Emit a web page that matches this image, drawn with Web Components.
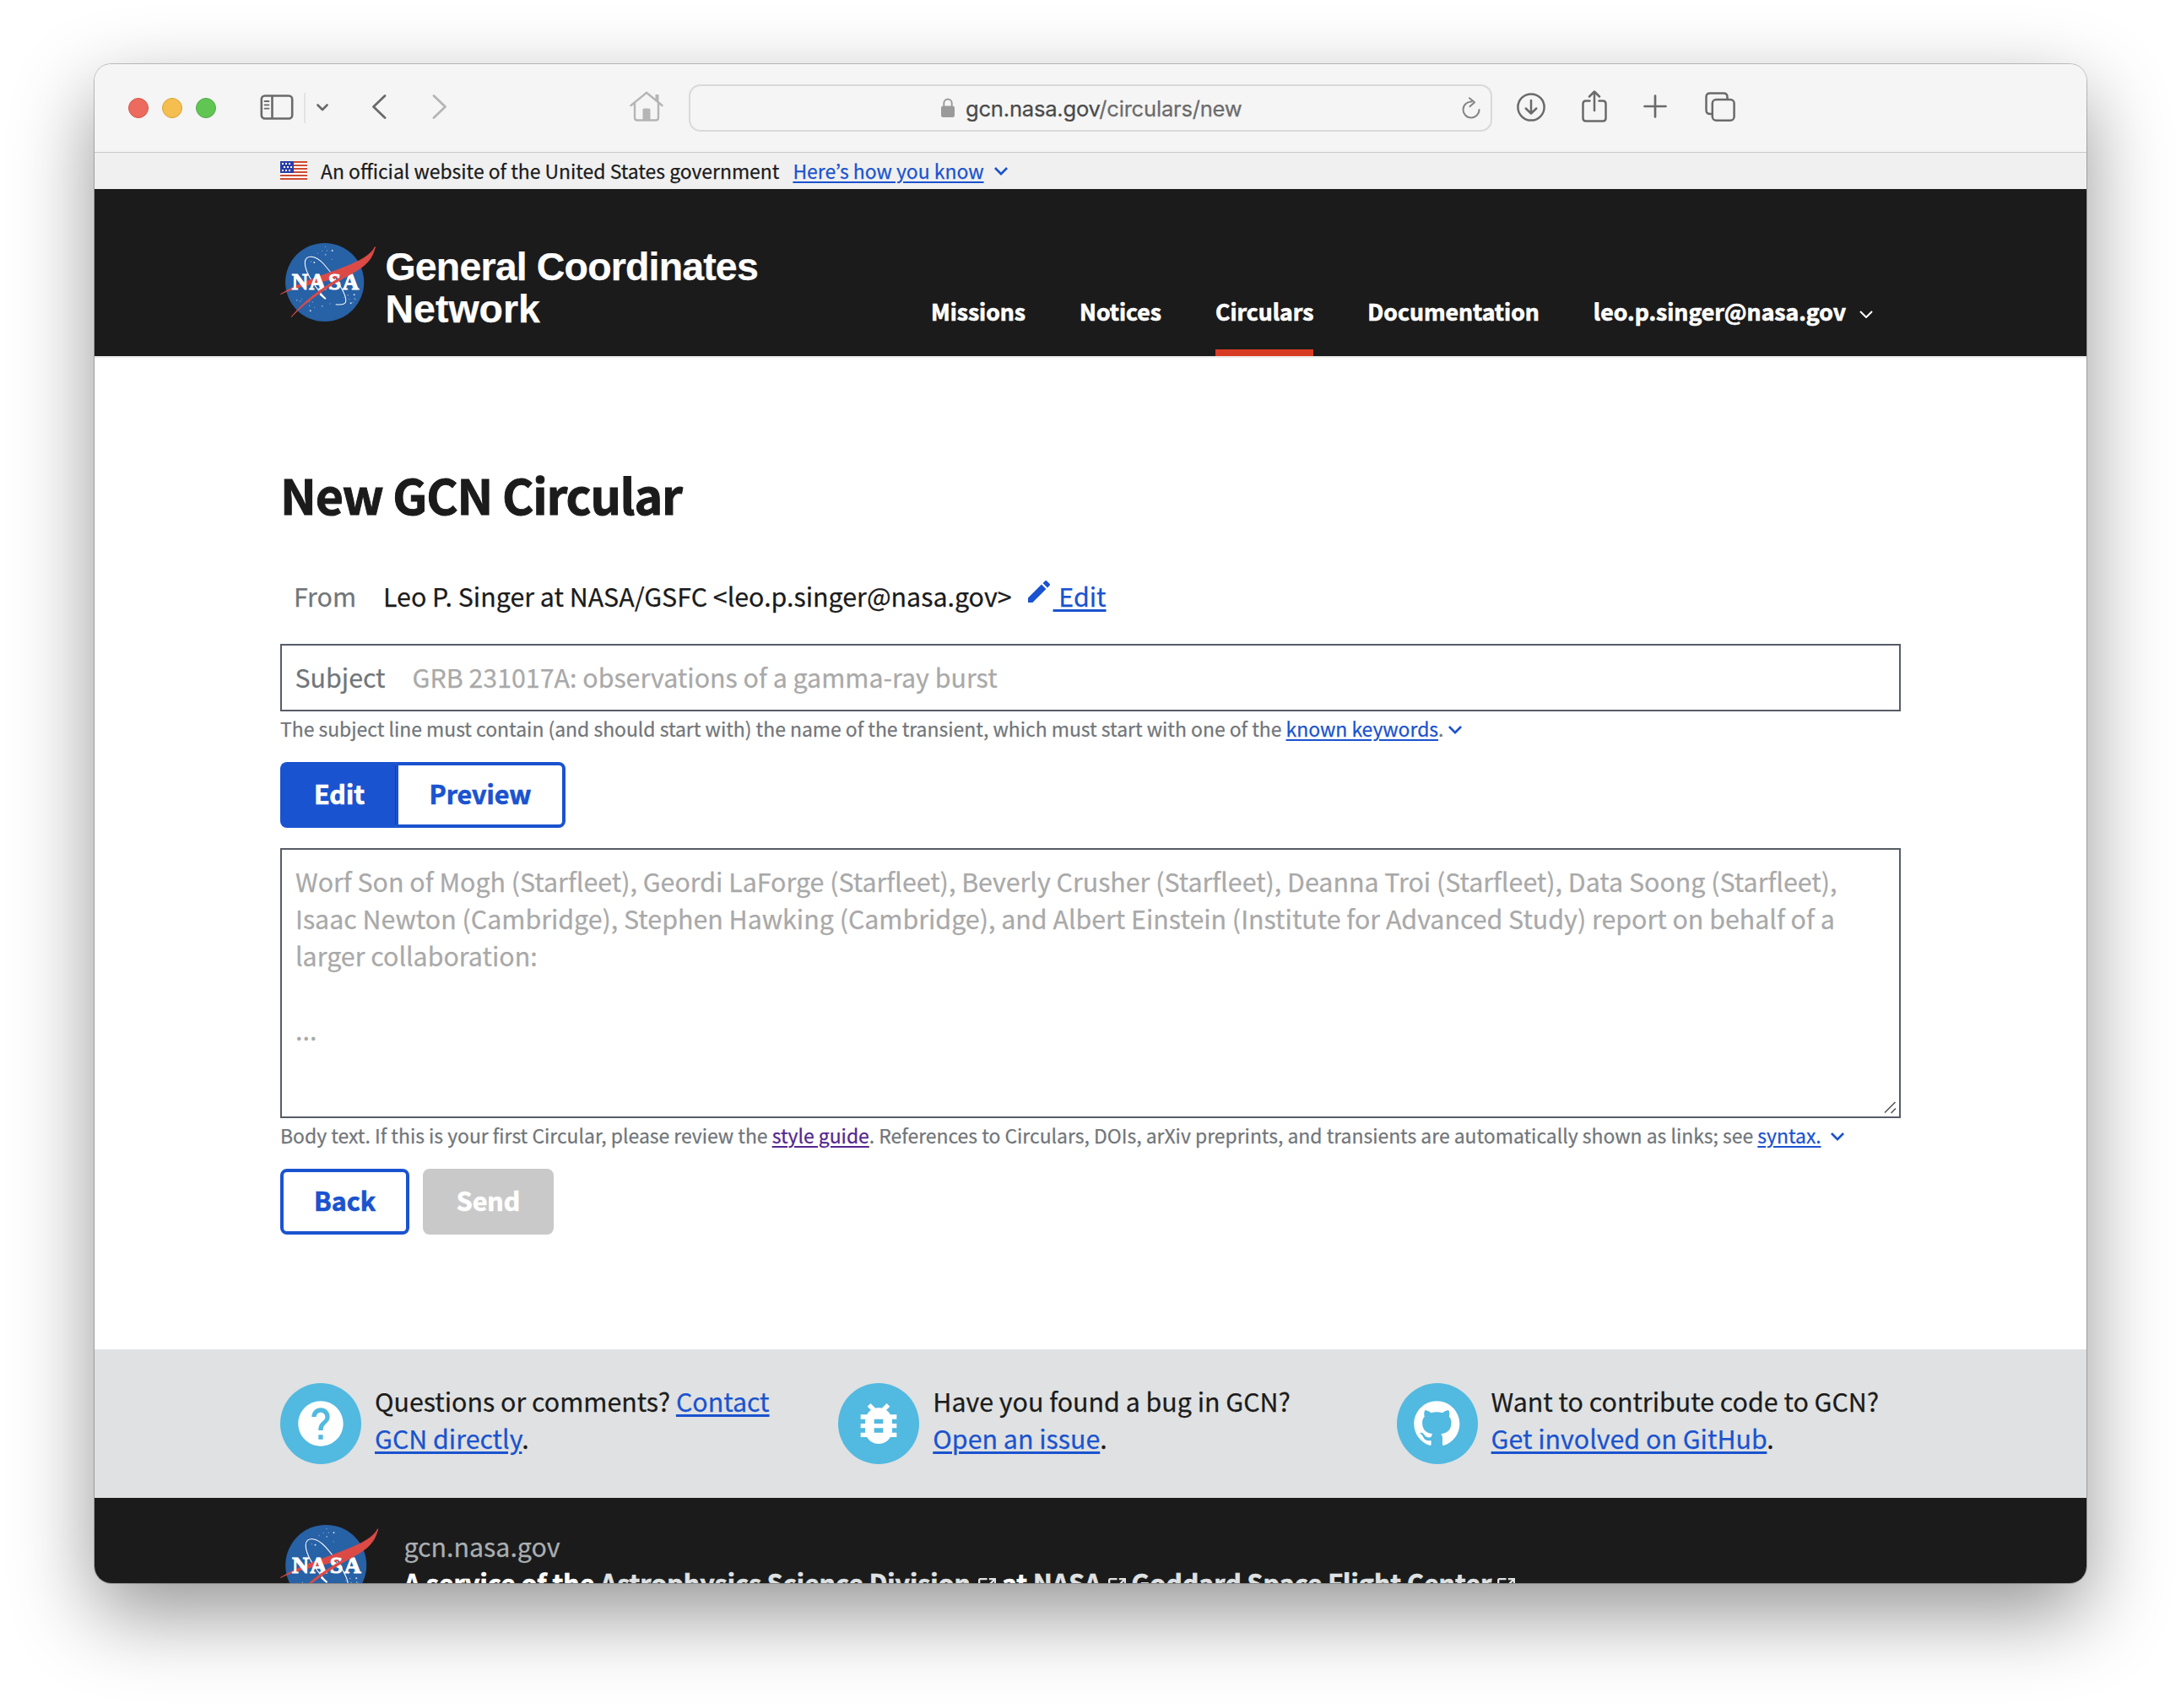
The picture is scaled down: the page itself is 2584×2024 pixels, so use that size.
<!DOCTYPE html>
<html lang="en">
<head>
<meta charset="utf-8">
<title>New GCN Circular</title>
<style>
  html { background: #fff; }
  body { margin: 0; padding: 76px 112px 148px; width: 2360px; overflow: hidden;
    font-family: "Noto Sans CJK KR", "Noto Sans", sans-serif; font-size: 30.37px; line-height: 44px; color: #1b1b1b; -webkit-text-stroke-width: .25px; }
</style>
</head>
<body>
<browser-window>
  <browser-toolbar slot="toolbar"></browser-toolbar>
  <gov-banner></gov-banner>
  <site-header>
    <nav-link>Missions</nav-link>
    <nav-link>Notices</nav-link>
    <nav-link current>Circulars</nav-link>
    <nav-link>Documentation</nav-link>
    <nav-link menu>leo.p.singer@nasa.gov</nav-link>
  </site-header>
  <circular-form></circular-form>
  <support-strip>
    <support-card icon="help">Questions or comments? <text-link>Contact</text-link><br><text-link>GCN directly</text-link>.</support-card>
    <support-card icon="bug">Have you found a bug in GCN?<br><text-link>Open an issue</text-link>.</support-card>
    <support-card icon="github">Want to contribute code to GCN?<br><text-link>Get involved on GitHub</text-link>.</support-card>
  </support-strip>
  <site-identifier></site-identifier>
</browser-window>

<script>
const define = (name, html) => {
  const t = document.createElement('template');
  t.innerHTML = html;
  customElements.define(name, class extends HTMLElement {
    constructor() { super(); this.attachShadow({ mode: 'open' }).append(t.content.cloneNode(true)); }
  });
};

const ICONS = {
  help: ['0 0 24 24', '<path d="M12 2C6.48 2 2 6.48 2 12s4.48 10 10 10 10-4.48 10-10S17.52 2 12 2zm1 17h-2v-2h2v2zm2.07-7.75l-.9.92C13.45 12.9 13 13.5 13 15h-2v-.5c0-1.1.45-2.1 1.17-2.83l1.24-1.26c.37-.36.59-.86.59-1.41 0-1.1-.9-2-2-2s-2 .9-2 2H8c0-2.21 1.79-4 4-4s4 1.79 4 4c0 .88-.36 1.68-.93 2.25z"/>'],
  bug: ['0 0 24 24', '<path d="M20 8h-2.81c-.45-.78-1.07-1.45-1.82-1.96L17 4.41 15.59 3l-2.17 2.17C12.96 5.06 12.49 5 12 5c-.49 0-.96.06-1.41.17L8.41 3 7 4.41l1.62 1.63C7.88 6.55 7.26 7.22 6.81 8H4v2h2.09c-.05.33-.09.66-.09 1v1H4v2h2v1c0 .34.04.67.09 1H4v2h2.81c1.04 1.79 2.97 3 5.19 3s4.15-1.21 5.19-3H20v-2h-2.09c.05-.33.09-.66.09-1v-1h2v-2h-2v-1c0-.34-.04-.67-.09-1H20V8zm-6 8h-4v-2h4v2zm0-4h-4v-2h4v2z"/>'],
  github: ['-1.9 -2 28.4 28.4', '<path d="M12 .297c-6.63 0-12 5.373-12 12 0 5.303 3.438 9.8 8.205 11.385.6.113.82-.258.82-.577 0-.285-.01-1.04-.015-2.04-3.338.724-4.042-1.61-4.042-1.61C4.422 18.07 3.633 17.7 3.633 17.7c-1.087-.744.084-.729.084-.729 1.205.084 1.838 1.236 1.838 1.236 1.07 1.835 2.809 1.305 3.495.998.108-.776.417-1.305.76-1.605-2.665-.3-5.466-1.332-5.466-5.93 0-1.31.465-2.38 1.235-3.22-.135-.303-.54-1.523.105-3.176 0 0 1.005-.322 3.3 1.23.96-.267 1.98-.399 3-.405 1.02.006 2.04.138 3 .405 2.28-1.552 3.285-1.23 3.285-1.23.645 1.653.24 2.873.12 3.176.765.84 1.23 1.91 1.23 3.22 0 4.61-2.805 5.625-5.475 5.92.42.36.81 1.096.81 2.22 0 1.606-.015 2.896-.015 3.286 0 .315.21.69.825.57C20.565 22.092 24 17.592 24 12.297c0-6.627-5.373-12-12-12"/>'],
  edit: ['3 3 18 18', '<path d="M3 17.25V21h3.75L17.81 9.94l-3.75-3.75L3 17.25zM20.71 7.04c.39-.39.39-1.02 0-1.41l-2.34-2.34c-.39-.39-1.02-.39-1.41 0l-1.83 1.83 3.75 3.75 1.83-1.83z"/>'],
  expand: ['6 8.59 12 7.41', '<path d="M16.59 8.59 12 13.17 7.41 8.59 6 10l6 6 6-6z"/>'],
  launch: ['3 3 18 18', '<path d="M19 19H5V5h7V3H5c-1.11 0-2 .9-2 2v14c0 1.1.89 2 2 2h14c1.1 0 2-.9 2-2v-7h-2v7zM14 3v2h3.59l-9.83 9.83 1.41 1.41L19 6.41V10h2V3h-7z"/>'],
  menu: ['0 0 16 9', '<path d="M1 1l7 7 7-7" fill="none" stroke="currentColor" stroke-width="2"/>'],
  sidebar: ['0 0 40 30', '<g fill="none" stroke="currentColor" stroke-width="2.6"><rect x="1.8" y="1.5" width="36.4" height="27" rx="4"/><path d="M14.5 2v26"/><path d="M5.500 8h5M5.500 12.300h5M5.500 16.600h5" stroke-width="1.8" stroke-linecap="round"/></g>'],
  down: ['0 0 14 9', '<path d="M1.500 1.500l5.500 5.500 5.500-5.500" fill="none" stroke="currentColor" stroke-width="2.600" stroke-linecap="round" stroke-linejoin="round"/>'],
  back: ['0 0 18 29', '<path d="M16 1.500 2.500 14.500 16 27.500" fill="none" stroke="currentColor" stroke-width="2.800" stroke-linecap="round" stroke-linejoin="round"/>'],
  forward: ['0 0 18 29', '<path d="M2 1.500 15.500 14.500 2 27.500" fill="none" stroke="currentColor" stroke-width="2.800" stroke-linecap="round" stroke-linejoin="round"/>'],
  home: ['0 0 40 36', '<g fill="none" stroke="currentColor" stroke-width="2.400" stroke-linecap="round" stroke-linejoin="round"><path d="M1.500 17 20 1.800 38.500 17M6 14v17.500q0 3 3 3h22q3 0 3-3V14"/></g><path d="M15.500 34V22q0-1.500 1.500-1.500h6q1.500 0 1.500 1.500v12zM30.500 4h4v10l-4-3.500z"/>'],
  lock: ['0 0 16 23', '<rect x="0" y="9.500" width="16" height="13.500" rx="2.500"/><path d="M3.300 11V6.200a4.700 4.700 0 0 1 9.400 0V11" fill="none" stroke="currentColor" stroke-width="1.900"/>'],
  reload: ['0 0 22 26', '<path d="M11.500 5.500A9.500 9.500 0 1 0 20.500 15M9 1.200l6 5-5.600 5" fill="none" stroke="currentColor" stroke-width="2" stroke-linecap="round" stroke-linejoin="round"/>'],
  download: ['0 0 34 34', '<g fill="none" stroke="currentColor" stroke-width="2.500" stroke-linecap="round" stroke-linejoin="round"><circle cx="17" cy="17" r="15.600"/><path d="M17 9v15.500M10.800 18.500l6.200 6.200 6.200-6.200"/></g>'],
  share: ['0 0 30 38', '<g fill="none" stroke="currentColor" stroke-width="2.500" stroke-linecap="round" stroke-linejoin="round"><path d="M9.500 12.500H5q-3.500 0-3.500 3.500v17q0 3.500 3.500 3.500h20q3.500 0 3.500-3.500V16q0-3.500-3.500-3.500h-4.500M15 24V2M9 7.500 15 1.500l6 6"/></g>'],
  plus: ['0 0 28 28', '<path d="M14 1.500v25M1.500 14h25" stroke="currentColor" stroke-width="2.700" stroke-linecap="round"/>'],
  tabs: ['0 0 36 35', '<g fill="none" stroke="currentColor" stroke-width="2.500"><rect x="8.800" y="9" width="25.800" height="24.700" rx="4.500"/><path d="M8.800 26H6q-4.500 0-4.500-4.500v-15.500Q1.500 1.500 6 1.500h16q4.500 0 4.500 4.500v3"/></g>']
};

customElements.define('ui-icon', class extends HTMLElement {
  constructor() { super(); this.attachShadow({ mode: 'open' }); }
  connectedCallback() {
    const [box, body] = ICONS[this.getAttribute('name')];
    const w = this.getAttribute('w'), h = this.getAttribute('h') || w;
    this.shadowRoot.innerHTML = `<style>:host{display:inline-block;flex:none;width:${w}px;height:${h}px}svg{display:block}</style><svg width="${w}" height="${h}" viewBox="${box}" preserveAspectRatio="none" fill="currentColor">${body}</svg>`;
  }
});

define('text-link', `<style>:host{color:#1a53cf;text-decoration:underline;text-decoration-thickness:3px;text-underline-offset:3px}
:host([small]){text-decoration-thickness:2px;text-underline-offset:3px}:host([visited]){color:#54278f}</style><slot></slot>`);

define('browser-window', `<style>
:host{display:flex;flex-direction:column;height:1800px;box-shadow:0 0 0 1px rgba(0,0,0,.22),0 36px 96px rgba(0,0,0,.42);border-radius:20px;background:#fff}
.clip{display:flex;flex-direction:column;height:1800px;overflow:hidden;border-radius:20px}
</style><div class="clip"><slot name="toolbar"></slot><slot></slot></div>`);

define('browser-toolbar', `<style>
:host{display:flex;flex:none;box-sizing:border-box;height:105px;padding:0 0 1px 40px;background:#f5f5f5;border-bottom:1px solid #c9c9c9;align-items:center;color:#6a6a6a}
.dot{width:22px;height:22px;border-radius:50%;border:1px solid;margin-right:16px}
.sep{width:2px;height:36px;background:#e3e3e3;margin:0 13px}
.url{display:flex;box-sizing:border-box;width:952px;height:56px;border:2px solid #d9d9d9;border-radius:14px;align-items:center;margin:0 29px 0 30px;padding:0 12px 0 297px;font:25.600px/30px Inter,sans-serif;letter-spacing:-.230px;color:#6c6c6c}
.url b{font-weight:400;color:#4a4a4a}
.url span{margin:2px auto 0 13px}
.light{color:#b5b5b5}
</style>
<i class="dot" style="background:#ec6a5e;border-color:#d55549"></i><i class="dot" style="background:#f4bf4f;border-color:#d9a23b"></i><i class="dot" style="background:#61c554;border-color:#50a944"></i>
<ui-icon name="sidebar" w="40" h="30" style="margin-left:36px;margin-top:-2px"></ui-icon><i class="sep" style="margin-left:12px"></i><ui-icon name="down" w="14" h="9"></ui-icon>
<ui-icon name="back" w="18" h="29" style="margin-left:51px;margin-top:-2px"></ui-icon><ui-icon class="light" name="forward" w="18" h="29" style="margin-left:54px;margin-top:-2px"></ui-icon>
<ui-icon class="light" name="home" w="40" h="36" style="margin-left:216px;margin-top:-4px"></ui-icon>
<div class="url"><ui-icon name="lock" w="16" h="23" style="color:#9a9a9a"></ui-icon><span><b>gcn.nasa.gov</b>/circulars/new</span><ui-icon name="reload" w="22" h="26" style="color:#868686"></ui-icon></div>
<ui-icon name="download" w="34" style="margin-top:-1px"></ui-icon><ui-icon name="share" w="30" h="38" style="margin-left:43px;margin-top:-4px"></ui-icon><ui-icon name="plus" w="28" style="margin-left:43px;margin-top:-3px"></ui-icon><ui-icon name="tabs" w="36" h="35" style="margin-left:44.500px;margin-top:-3px"></ui-icon>`);

define('gov-banner', `<style>
:host{display:flex;flex:none;box-sizing:border-box;height:43px;padding:0 0 2px 220px;background:#f0f0f0;align-items:center;font-size:22.915px;line-height:40px}
.flag{margin-right:16px}.t{margin-right:16px}ui-icon{color:#1a53cf;margin-left:12px;margin-top:3px}
</style>
<svg class="flag" width="32" height="22" viewBox="0 0 32 22"><path fill="#fff" d="M0 0h32v22H0z"/><path stroke="#ce4b32" stroke-width="2" d="M0 1h32M0 5h32M0 9h32M0 13h32M0 17h32M0 21h32"/><path fill="#2a3ea8" d="M0 0h16v14H0z"/><path stroke="#fff" stroke-width="2" stroke-dasharray="2 2" d="M2 3h12M4 7h12M2 11h12"/></svg>
<span class="t">An official website of the United States government</span><text-link small>Here’s how you know</text-link><ui-icon name="expand" w="16" h="10"></ui-icon>`);

define('nasa-logo', `<style>:host{display:block;flex:none;line-height:0}svg{overflow:visible;width:var(--w,114px);height:auto;display:block}text{font:bold 81px "Liberation Serif",serif;fill:#fff;stroke:#fff;stroke-width:3}.w{fill:#dc4a46;stroke:#dc4a46;stroke-width:2}</style>
<svg viewBox="21 39 342 279" width="114" height="93">
<circle cx="179" cy="178.500" r="139.800" fill="#2761a6"/>
<g fill="#cfe0f2"><circle cx="206" cy="66" r="3"/><circle cx="142" cy="108" r="3"/><circle cx="128" cy="280" r="3"/><circle cx="272" cy="253" r="3"/><circle cx="284" cy="223" r="3"/>
<g opacity=".55"><circle cx="181" cy="52" r="2"/><circle cx="170" cy="67" r="2"/><circle cx="155" cy="76" r="2"/><circle cx="182" cy="80" r="3"/><circle cx="205" cy="97" r="2"/><circle cx="188" cy="66" r="2"/><circle cx="130" cy="105" r="2"/><circle cx="80" cy="242" r="2.500"/><circle cx="92" cy="246" r="2.500"/><circle cx="98" cy="238" r="2"/><circle cx="124" cy="247" r="2"/><circle cx="136" cy="249" r="2"/><circle cx="125" cy="262" r="2.500"/><circle cx="143" cy="268" r="2"/><circle cx="170" cy="263" r="3"/><circle cx="198" cy="255" r="2"/><circle cx="262" cy="224" r="2.500"/><circle cx="285" cy="237" r="2.500"/><circle cx="266" cy="238" r="2"/><circle cx="248" cy="232" r="2"/><circle cx="280" cy="250" r="2"/><circle cx="289" cy="240" r="2"/></g></g>
<path d="M181 236C148 198 108 145 109 108c1-30 38-26 67 6 42 46 84 112 78 134-3 11-17 11-36 9" fill="none" stroke="#fff" stroke-width="3.200"/>
<path d="M164 222l17 14" stroke="#fff" stroke-width="6" stroke-linecap="round"/>
<path class="w" d="M358 53C340 84 305 102 250 124 170 156 82 182 22 221c62-30 132-38 204-60 70-22 112-48 132-108z"/>
<text x="62 124 192 242" y="205">NASA</text>
<path class="w" d="M358 53c-14 42-40 62-78 82C190 186 122 226 60 302c68-68 132-108 222-158 46-26 68-50 76-91z"/>
</svg>`);

customElements.define('nav-link', class extends HTMLElement {
  constructor() {
    super();
    this.attachShadow({ mode: 'open' }).innerHTML = `<style>
:host{display:flex;box-sizing:border-box;height:73px;font-size:26.600px;font-weight:700;-webkit-text-stroke-width:.7px;line-height:40px;color:#fff;border-bottom:8px solid transparent;align-items:flex-start}
:host([current]){border-bottom-color:#d83b24}
ui-icon{margin:19px 0 0 16px}
</style><slot></slot>${this.hasAttribute('menu') ? '<ui-icon name="menu" w="16" h="9"></ui-icon>' : ''}`;
  }
});

define('site-header', `<style>
:host{display:flex;flex:none;box-sizing:border-box;height:200px;background:#1b1b1b;border-bottom:2px solid #ececec;padding:64px 253px 0 220px}
.name{margin:3px 0 0 10.500px;font:bold 46.500px/50px "Liberation Sans",sans-serif;color:#fff}
.tight{letter-spacing:-.840px}
nav{display:flex;gap:64px;margin-left:auto;align-self:flex-end}
</style>
<nasa-logo></nasa-logo><div class="name"><span class="tight">General Coordinates</span><br>Network</div><nav><slot></slot></nav>`);

define('ui-button', `<style>
:host{display:flex;box-sizing:border-box;height:78px;padding:0 36px 4px;border:4px solid #1a53cf;border-radius:8px;font-weight:700;-webkit-text-stroke-width:.7px;color:#1a53cf;align-items:center;justify-content:center}
:host([filled]){background:#1a53cf;color:#fff}
:host([disabled]){background:#c9c9c9;border-color:#c9c9c9;color:#fff}
:host([first]){border-radius:8px 0 0 8px;border-right:1px solid #16429f}
:host([last]){border-radius:0 8px 8px 0;border-left-width:3px}
</style><slot></slot>`);

define('circular-form', `<style>
:host{display:flex;flex-direction:column;flex:none;box-sizing:border-box;height:1175px;padding:121px 220px 0;background:#fff}
h1{margin:0;font-size:57.200px;line-height:80px;font-weight:700;letter-spacing:-1.200px;-webkit-text-stroke-width:1px}
.from{display:flex;margin:59px 0 35px;padding-left:16px;height:44px}
.label{color:#71767a}
.from .label{width:106px}
.pencil{color:#1a53cf;margin:4px 4px 0 19px}
.box{box-sizing:border-box;border:2px solid #565c65;color:#a9a9a9}
.subject{display:flex;height:80px;padding:15px 0 0 15.500px}
.subject .label{width:139px}
.hint{height:32px;margin-top:4px;font-size:22.915px;line-height:32px;color:#71767a;white-space:nowrap;display:flex;align-items:center}
.hint ui-icon{color:#1a53cf;margin-top:4px}
.row{display:flex;margin-top:24px}
.body{display:flex;flex-direction:column;margin-top:24px;height:320px;padding:15px 0 0 16px;white-space:pre-line}
.grip{margin:auto 3px 3px auto;display:block}
</style>
<h1>New GCN Circular</h1>
<div class="from"><span class="label">From</span><span>Leo P. Singer at NASA/GSFC &lt;leo.p.singer@nasa.gov&gt;</span><ui-icon class="pencil" name="edit" w="26"></ui-icon><text-link>&nbsp;Edit</text-link></div>
<div class="box subject"><span class="label">Subject</span><span>GRB 231017A: observations of a gamma-ray burst</span></div>
<div class="hint"><span>The subject line must contain (and should start with) the name of the transient, which must start with one of the <text-link small>known keywords</text-link>.</span><ui-icon name="expand" w="16" h="10" style="margin-left:6px"></ui-icon></div>
<div class="row"><ui-button filled first style="width:137px">Edit</ui-button><ui-button last style="width:201px">Preview</ui-button></div>
<div class="box body"><span>Worf Son of Mogh (Starfleet), Geordi LaForge (Starfleet), Beverly Crusher (Starfleet), Deanna Troi (Starfleet), Data Soong (Starfleet),
Isaac Newton (Cambridge), Stephen Hawking (Cambridge), and Albert Einstein (Institute for Advanced Study) report on behalf of a
larger collaboration:

...</span><svg class="grip" width="15" height="15" viewBox="0 0 15 15" stroke="#555" stroke-width="1.600"><path d="M1 13.500 13.500 1M8.500 14 14 8.500"/></svg></div>
<div class="hint"><span>Body text. If this is your first Circular, please review the <text-link small visited>style guide</text-link>. References to Circulars, DOIs, arXiv preprints, and transients are automatically shown as links; see <text-link small>syntax.</text-link></span><ui-icon name="expand" w="16" h="10" style="margin-left:11px"></ui-icon></div>
<div class="row" style="gap:16px"><ui-button style="width:153px">Back</ui-button><ui-button disabled style="width:155px">Send</ui-button></div>`);

define('support-strip', `<style>:host{display:grid;flex:none;box-sizing:border-box;height:176px;grid-template-columns:repeat(3,661.300px);padding:40px 0 0 220px;background:#dfe1e2}</style><slot></slot>`);

customElements.define('support-card', class extends HTMLElement {
  constructor() {
    super();
    this.attachShadow({ mode: 'open' }).innerHTML = `<style>
:host{display:flex;gap:16px}
.disc{display:flex;flex:none;width:96px;height:96px;border-radius:50%;background:#52b9e0;color:#fff;align-items:center;justify-content:center}
.copy{margin-top:-1px}
</style><div class="disc"><ui-icon name="${this.getAttribute('icon')}" w="64"></ui-icon></div><div class="copy"><slot></slot></div>`;
  }
});

define('site-identifier', `<style>
:host{display:flex;flex:none;height:260px;padding:32px 0 0 220px;background:#1b1b1b;color:#fff}
nasa-logo{--w:117.400px}
.copy{margin:3px 0 0 29px}
.domain{color:#a9aeb1}
.line{font-weight:700;-webkit-text-stroke-width:.7px;margin-top:-1px;white-space:nowrap}
.line span{color:#dfe1e2}
ui-icon{color:#dfe1e2;margin:0 0 -3px 9px}
</style>
<nasa-logo></nasa-logo>
<div class="copy"><div class="domain">gcn.nasa.gov</div>
<div class="line">A service of the <span>Astrophysics Science Division</span><ui-icon name="launch" w="21"></ui-icon> at <span>NASA</span><ui-icon name="launch" w="21" style="margin-left:8px"></ui-icon> <span>Goddard Space Flight Center</span><ui-icon name="launch" w="21" style="margin-left:7px"></ui-icon></div></div>`);
</script>
</body>
</html>
